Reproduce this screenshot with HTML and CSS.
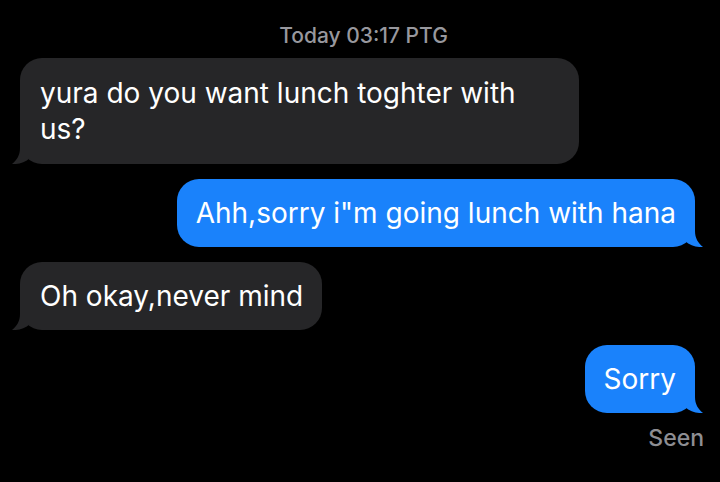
FILE: index.html
```html
<!DOCTYPE html>
<html>
<head>
<meta charset="utf-8">
<link rel="stylesheet" href="styles.css">
</head>
<body>
<div class="chat">
  <div class="stamp"><span class="day">Today</span> 03:17 PTG</div>
  <div class="msg in wide">
    <span>yura do you want lunch toghter with us?</span>
    <svg class="tail" width="30" height="22" viewBox="0 0 30 22"><path d="M8 0 L8 6 C8 13 5 18 0 22 C6 22.5 13 20.5 18 16 L18 0 Z"/></svg>
  </div>
  <div class="msg out">
    <span>Ahh,sorry i"m going lunch with hana</span>
    <svg class="tail" width="30" height="22" viewBox="0 0 30 22"><path d="M22 0 L22 6 C22 13 25 18 30 22 C24 22.5 17 20.5 12 16 L12 0 Z"/></svg>
  </div>
  <div class="msg in">
    <span>Oh okay,never mind</span>
    <svg class="tail" width="30" height="22" viewBox="0 0 30 22"><path d="M8 0 L8 6 C8 13 5 18 0 22 C6 22.5 13 20.5 18 16 L18 0 Z"/></svg>
  </div>
  <div class="msg out">
    <span>Sorry</span>
    <svg class="tail" width="30" height="22" viewBox="0 0 30 22"><path d="M22 0 L22 6 C22 13 25 18 30 22 C24 22.5 17 20.5 12 16 L12 0 Z"/></svg>
  </div>
  <div class="seen">Seen</div>
</div>
</body>
</html>
```
FILE: styles.css
```css
html, body {
  margin: 0;
  padding: 0;
  background: #000;
}
body {
  width: 720px;
  height: 482px;
  overflow: hidden;
  font-family: Inter, "Liberation Sans", sans-serif;
  -webkit-font-smoothing: antialiased;
}
.chat {
  display: flex;
  flex-direction: column;
  padding: 23px 25px 0 20px;
}
.stamp {
  align-self: center;
  margin-left: 12px;
  color: #98989e;
  font-size: 21px;
  line-height: 26px;
  font-weight: 500;
  margin-bottom: 9px;
}
.msg {
  position: relative;
  max-width: 559px;
  box-sizing: border-box;
  padding: 16px 19px 16px 20px;
  border-radius: 22px;
  color: #fff;
  font-size: 28px;
  line-height: 36px;
  margin-bottom: 15px;
}
.msg.in {
  align-self: flex-start;
  background: #262628;
}
.msg.wide {
  padding-top: 17px;
  padding-bottom: 17px;
  width: 559px;
}
.msg.out {
  align-self: flex-end;
  background: #1a82fb;
  padding-left: 19px;
}
.tail {
  position: absolute;
  bottom: 0;
}
.msg.in .tail {
  left: -8px;
  fill: #262628;
}
.msg.out .tail {
  right: -8px;
  fill: #1a82fb;
}
.seen {
  align-self: flex-end;
  margin-right: -9px;
  margin-top: -4px;
  color: #8e8e93;
  font-size: 23px;
  line-height: 28px;
  font-weight: 500;
}
```
